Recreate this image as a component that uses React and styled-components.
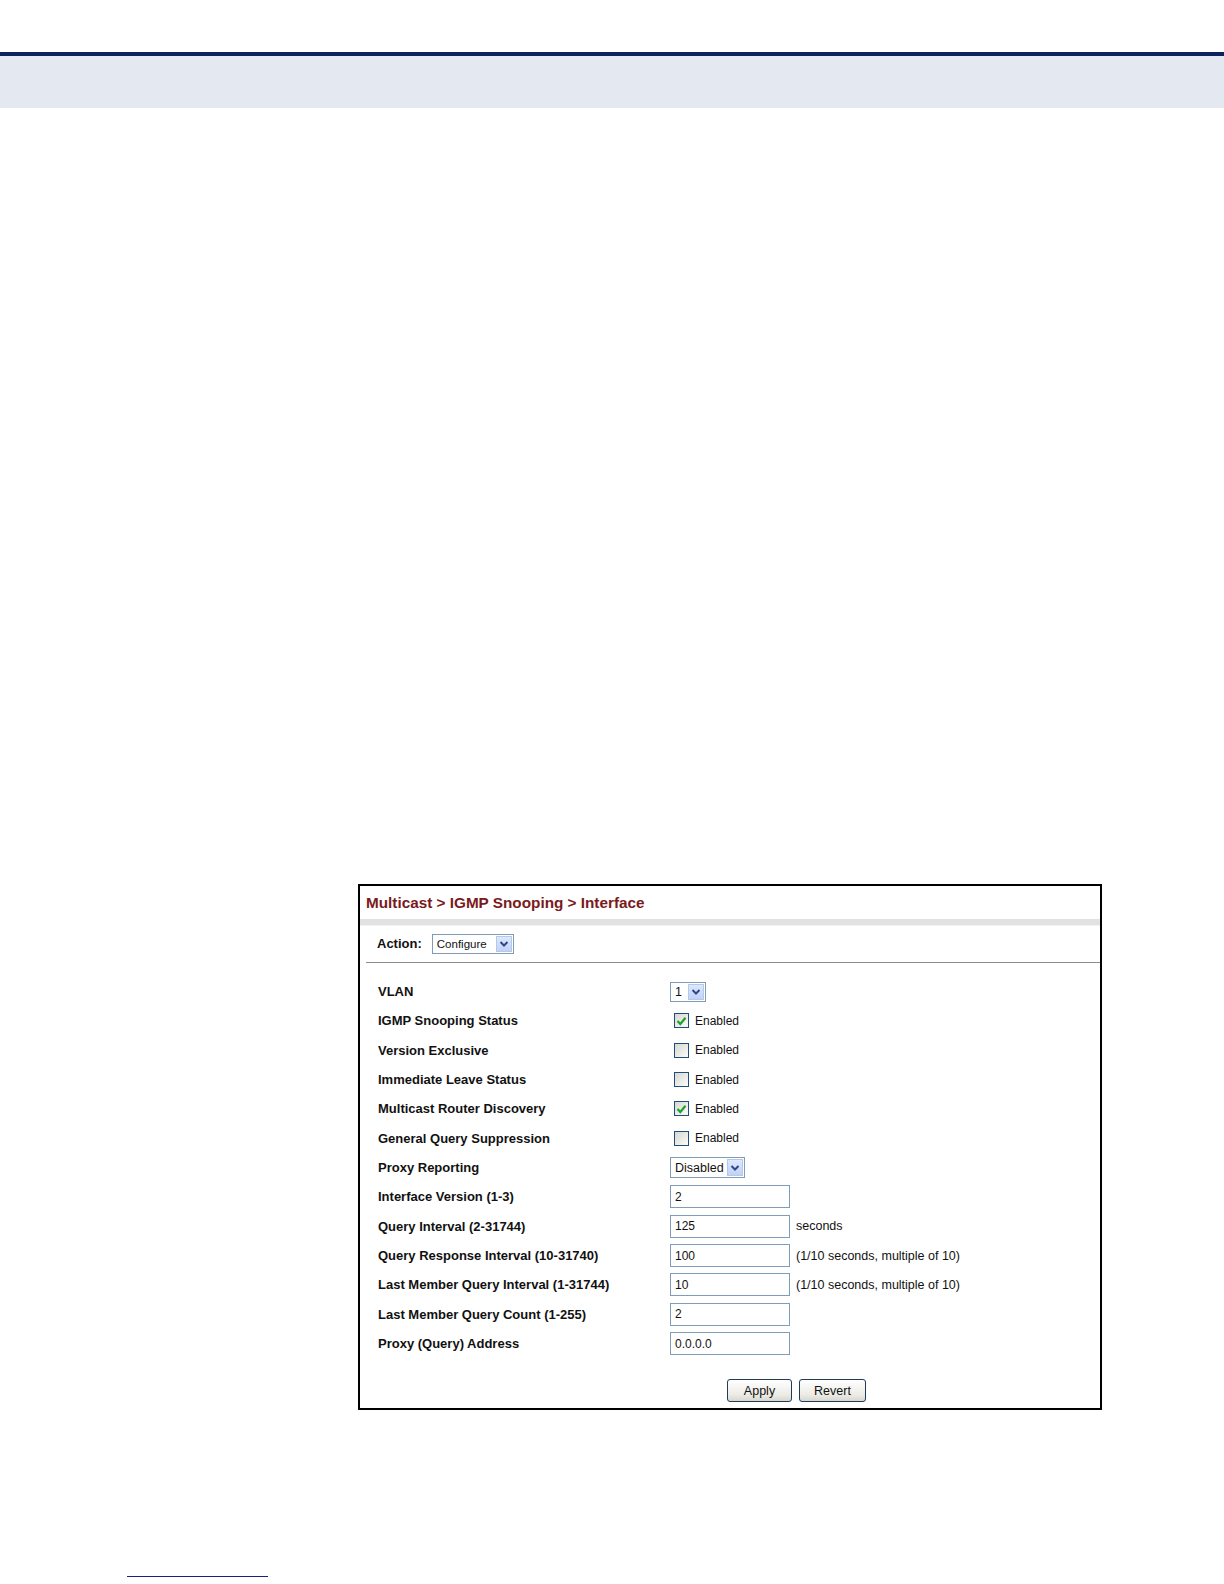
import React from "react";
import styled, { createGlobalStyle } from "styled-components";

const GlobalStyle = createGlobalStyle`
  html, body {
    margin: 0;
    padding: 0;
    background: #fff;
  }
  body {
    font-family: "Liberation Sans", Arial, sans-serif;
    color: #000;
  }
`;

const Page = styled.div`
  width: 1224px;
  height: 1584px;
  display: flex;
  flex-direction: column;
`;

const HeaderBand = styled.div`
  margin-top: 52px;
  height: 52px;
  border-top: 4px solid #0b2162;
  background: #e4e8f0;
`;

const Panel = styled.div`
  margin: 776px 0 0 358px;
  width: 740px;
  height: 522px;
  border: 2px solid #000;
  display: flex;
  flex-direction: column;
`;

const TitleBar = styled.div`
  height: 33px;
  padding: 0 0 0 6px;
  display: flex;
  align-items: center;
  font-size: 15.3px;
  font-weight: bold;
  color: #7a1a1c;
  border-bottom: 6px solid #e2e2e2;
  box-shadow: 0 1px 0 #f2f2f2;
`;

const ActionRow = styled.div`
  height: 37px;
  margin-left: 6px;
  padding-left: 11px;
  display: flex;
  align-items: center;
  gap: 10px;
  border-bottom: 1px solid #8c8c8c;
`;

const Label = styled.span`
  font-size: 13px;
  font-weight: bold;
  color: #111;
`;

const Form = styled.div`
  margin-top: 14px;
  padding-left: 18px;
  display: grid;
  grid-template-columns: 292px auto;
  grid-auto-rows: 29.33px;
  align-items: center;
`;

const Control = styled.div`
  display: flex;
  align-items: center;
  gap: 6px;
`;

const SelectBox = styled.div`
  width: ${({ w }) => w}px;
  height: ${({ h }) => h || 20}px;
  box-sizing: border-box;
  border: 1px solid #7f9db9;
  background: #fff;
  display: flex;
  align-items: center;
  justify-content: space-between;
  padding: 1px 1px 1px 4px;
  font-size: ${({ fs }) => fs || 12.5}px;
  color: #111;
`;

const ArrowBtn = styled.span`
  width: 16px;
  height: 100%;
  box-sizing: border-box;
  border: 1px solid #b5c8ec;
  background: linear-gradient(#dfe8fb, #c2d2f5);
  display: flex;
  align-items: center;
  justify-content: center;
`;

const Check = styled.span`
  width: 15px;
  height: 15px;
  margin-left: 4px;
  box-sizing: border-box;
  border: 1px solid #1c4f7e;
  background: linear-gradient(135deg, #d8d8d2, #fbfbf8);
  display: flex;
  align-items: center;
  justify-content: center;
`;

const SmallText = styled.span`
  font-size: ${({ fs }) => fs || 12}px;
  color: #111;
`;

const TextInput = styled.div`
  width: 120px;
  height: 23px;
  box-sizing: border-box;
  border: 1px solid #7f9db9;
  display: flex;
  align-items: center;
  padding-left: 4px;
  font-size: 12px;
  color: #111;
`;

const ButtonRow = styled.div`
  margin-top: 21px;
  padding-left: 367px;
  display: flex;
  gap: 7px;
`;

const Button = styled.div`
  width: ${({ w }) => w}px;
  height: 23px;
  box-sizing: border-box;
  border: 1px solid #1f3c5a;
  border-radius: 3px;
  background: linear-gradient(#ffffff, #ecebe6 70%, #d8d6cd);
  display: flex;
  align-items: center;
  justify-content: center;
  font-size: 12.5px;
  color: #111;
`;

const FootLine = styled.div`
  margin: 166px 0 0 127px;
  width: 141px;
  height: 1px;
  background: #1b1d8a;
`;

function Chevron() {
  return (
    <svg width="10" height="8" viewBox="0 0 10 8">
      <path d="M1.5 2 L5 5.5 L8.5 2" fill="none" stroke="#2a4a8c" strokeWidth="2" />
    </svg>
  );
}

function Select({ value, w, h, fs }) {
  return (
    <SelectBox w={w} h={h} fs={fs}>
      <span>{value}</span>
      <ArrowBtn>
        <Chevron />
      </ArrowBtn>
    </SelectBox>
  );
}

function Checkbox({ checked }) {
  return (
    <Control>
      <Check>
        {checked && (
          <svg width="11" height="10" viewBox="0 0 11 10">
            <path d="M1.5 5 L4.3 8 L9.5 1.8" fill="none" stroke="#22a12a" strokeWidth="2.2" />
          </svg>
        )}
      </Check>
      <SmallText>Enabled</SmallText>
    </Control>
  );
}

const rows = [
  ["VLAN", { type: "select", value: "1", w: 36 }],
  ["IGMP Snooping Status", { type: "check", checked: true }],
  ["Version Exclusive", { type: "check" }],
  ["Immediate Leave Status", { type: "check" }],
  ["Multicast Router Discovery", { type: "check", checked: true }],
  ["General Query Suppression", { type: "check" }],
  ["Proxy Reporting", { type: "select", value: "Disabled", w: 75, h: 21 }],
  ["Interface Version (1-3)", { type: "input", value: "2" }],
  ["Query Interval (2-31744)", { type: "input", value: "125", note: "seconds" }],
  ["Query Response Interval (10-31740)", { type: "input", value: "100", note: "(1/10 seconds, multiple of 10)" }],
  ["Last Member Query Interval (1-31744)", { type: "input", value: "10", note: "(1/10 seconds, multiple of 10)" }],
  ["Last Member Query Count (1-255)", { type: "input", value: "2" }],
  ["Proxy (Query) Address", { type: "input", value: "0.0.0.0" }],
];

function Field({ spec }) {
  if (spec.type === "select") return <Select value={spec.value} w={spec.w} h={spec.h} />;
  if (spec.type === "check") return <Checkbox checked={spec.checked} />;
  return (
    <Control>
      <TextInput>{spec.value}</TextInput>
      {spec.note && <SmallText fs={12.5}>{spec.note}</SmallText>}
    </Control>
  );
}

export default function App() {
  return (
    <Page>
      <GlobalStyle />
      <HeaderBand />
      <Panel>
        <TitleBar>Multicast &gt; IGMP Snooping &gt; Interface</TitleBar>
        <ActionRow>
          <Label>Action:</Label>
          <Select value="Configure" w={82} fs={11.5} />
        </ActionRow>
        <Form>
          {rows.map(([label, spec]) => (
            <React.Fragment key={label}>
              <Label>{label}</Label>
              <Field spec={spec} />
            </React.Fragment>
          ))}
        </Form>
        <ButtonRow>
          <Button w={65}>Apply</Button>
          <Button w={67}>Revert</Button>
        </ButtonRow>
      </Panel>
      <FootLine />
    </Page>
  );
}
